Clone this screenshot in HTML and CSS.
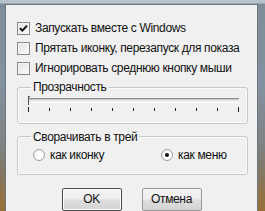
FILE: index.html
```html
<!DOCTYPE html>
<html>
<head>
<meta charset="utf-8">
<link rel="stylesheet" href="styles.css">
</head>
<body>
<div class="frame">
  <div class="face">
    <div class="opts">
      <div class="row"><span class="cb checked"><svg viewBox="0 0 9 9" width="9" height="9"><path d="M1 4.2 L3.4 6.6 L8 1.6" fill="none" stroke="#111" stroke-width="2"/></svg></span><span class="lbl">Запускать вместе с Windows</span></div>
      <div class="row"><span class="cb"></span><span class="lbl">Прятать иконку, перезапуск для показа</span></div>
      <div class="row"><span class="cb"></span><span class="lbl">Игнорировать среднюю кнопку мыши</span></div>
    </div>
    <fieldset class="group g1">
      <legend>Прозрачность</legend>
      <div class="slider">
        <div class="track"><span class="thumb"></span></div>
        <div class="ticks">
          <span class="tick long"></span><span class="tick"></span><span class="tick"></span><span class="tick"></span><span class="tick"></span><span class="tick"></span><span class="tick"></span><span class="tick"></span><span class="tick"></span><span class="tick"></span><span class="tick long"></span>
        </div>
      </div>
    </fieldset>
    <fieldset class="group g2">
      <legend>Сворачивать в трей</legend>
      <div class="radios">
        <div class="ritem r1"><span class="rb"></span><span class="lbl">как иконку</span></div>
        <div class="ritem r2"><span class="rb on"></span><span class="lbl">как меню</span></div>
      </div>
    </fieldset>
    <div class="buttons">
      <div class="btn def">OK</div>
      <div class="btn">Отмена</div>
    </div>
  </div>
</div>
</body>
</html>
```
FILE: styles.css
```css
html, body {
  margin: 0;
  padding: 0;
}
body {
  width: 265px;
  height: 211px;
  overflow: hidden;
  font-family: "Liberation Sans", Arial, sans-serif;
  font-size: 12px;
  letter-spacing: -0.35px;
  color: #111;
}
.frame {
  height: 211px;
  box-sizing: border-box;
  display: flex;
  padding: 4px 8px 0 5px;
  background:
    linear-gradient(180deg, rgba(180,190,200,0) 0%, rgba(180,190,200,0) 70%, rgba(150,110,50,0.7) 100%),
    linear-gradient(180deg, #b8c2cc 0px, #b8c2cc 3px, #7f8c99 4px, #8391a0 40%, #7c7a72 85%, #9a7645 100%);
}
.face {
  flex: 1;
  background: #f0f0f0;
  border: 1px solid #6e7780;
  border-bottom: none;
  padding: 13px 9px 0 11px;
  display: flex;
  flex-direction: column;
}
.opts {
  display: flex;
  flex-direction: column;
}
.row {
  height: 20px;
  display: flex;
  align-items: flex-start;
}
.cb {
  width: 11px;
  height: 11px;
  margin-top: 4px;
  border: 1px solid #8a8a8a;
  background: linear-gradient(135deg, #e2e2e2, #fbfbfb);
  box-shadow: inset 0 0 0 1px #f4f4f4;
  display: flex;
  align-items: center;
  justify-content: center;
  flex: none;
}
.cb svg { display: block; }
.lbl {
  margin-left: 5px;
  line-height: 20px;
  white-space: nowrap;
}
.group {
  margin: 0;
  padding: 0 8px;
  border: 1px solid #c2c8ce;
  border-radius: 3px;
  box-shadow: inset 0 0 0 1px #fbfbfb;
  min-width: 0;
}
.group legend {
  margin-left: 5px;
  padding: 0 2px;
  line-height: 14px;
  white-space: nowrap;
}
.g1 {
  margin-top: 2px;
  height: 44px;
  box-sizing: border-box;
}
.slider {
  padding: 1px 0 0 2px;
  width: 211px;
}
.track {
  height: 3px;
  margin-top: 3px;
  background: #e7eaea;
  border-top: 1px solid #8c8c8c;
  border-bottom: 1px solid #fff;
  box-shadow: inset 0 1px 0 #c8c8c8;
  display: flex;
}
.thumb {
  width: 2px;
  height: 9px;
  margin-top: -3px;
  border-left: 1px solid #555;
  border-top: 1px solid #555;
  box-sizing: border-box;
  background: transparent;
}
.ticks {
  margin-top: 5px;
  display: flex;
  justify-content: space-between;
  align-items: flex-start;
}
.tick {
  width: 1px;
  height: 3px;
  background: #222;
}
.tick.long {
  height: 5px;
  margin-top: -1px;
}
.g2 {
  margin-top: 6px;
  height: 46px;
  box-sizing: border-box;
}
.radios {
  display: flex;
  padding: 1px 0 0 7px;
}
.ritem {
  display: flex;
  align-items: center;
  height: 20px;
}
.r2 { margin-left: 57px; }
.rb {
  width: 10px;
  height: 10px;
  border-radius: 50%;
  border: 1px solid #a0a0a0;
  background: radial-gradient(circle at 60% 60%, #ffffff 30%, #e6e6e6 100%);
  display: flex;
  align-items: center;
  justify-content: center;
  flex: none;
}
.rb.on::after {
  content: "";
  width: 4px;
  height: 4px;
  border-radius: 50%;
  background: #111;
}
.buttons {
  display: flex;
  justify-content: center;
  gap: 20px;
  margin-top: 13px;
  padding-right: 2px;
}
.btn {
  width: 58px;
  height: 21px;
  border: 1px solid #9a9a9a;
  border-radius: 2px;
  background: linear-gradient(180deg, #f4f4f4 0%, #ececec 48%, #dedede 52%, #d3d3d3 100%);
  text-align: center;
  line-height: 21px;
  flex: none;
}
.btn.def {
  border-color: #4a4a4a;
  box-shadow: inset 0 0 0 1px #fdfdfd;
}
```
